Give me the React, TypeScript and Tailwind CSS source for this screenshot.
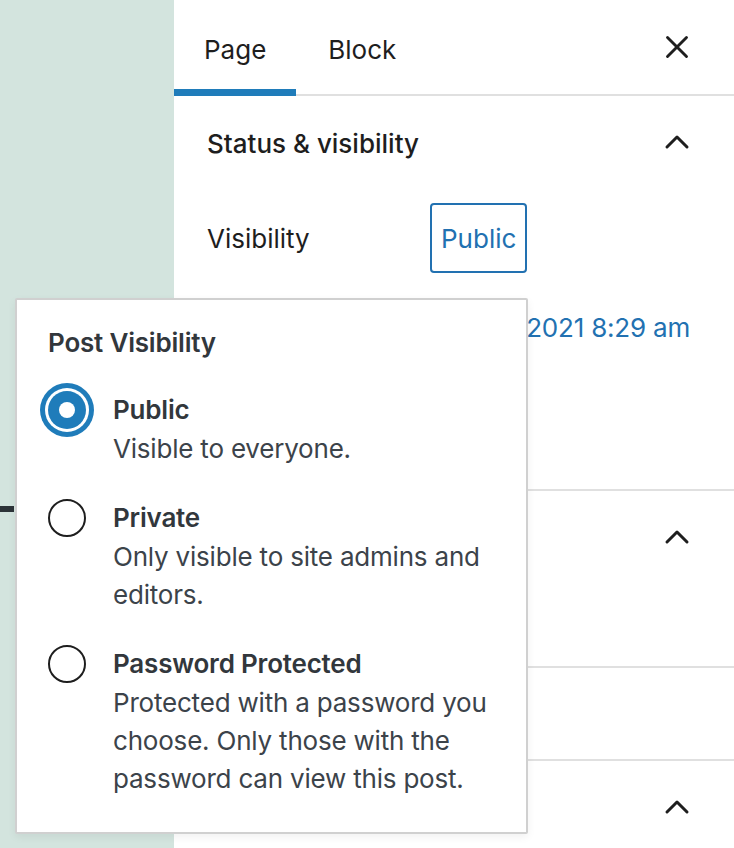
import { X, ChevronUp } from "lucide-react";

const font = { fontFamily: "Inter, 'Noto Sans', sans-serif" };

type Option = { id: string; label: string; desc: string[] };

const options: Option[] = [
  { id: "public", label: "Public", desc: ["Visible to everyone."] },
  { id: "private", label: "Private", desc: ["Only visible to site admins and", "editors."] },
  {
    id: "password",
    label: "Password Protected",
    desc: ["Protected with a password you", "choose. Only those with the", "password can view this post."],
  },
];

function Radio({ checked }: { checked: boolean }) {
  if (checked) {
    return (
      <span className="flex h-[38px] w-[38px] shrink-0 items-center justify-center rounded-full bg-[#1f7cba] shadow-[0_0_0_3px_#fff,0_0_0_8px_#1f7cba]">
        <span className="h-[16px] w-[16px] rounded-full bg-white" />
      </span>
    );
  }
  return <span className="h-[38px] w-[38px] shrink-0 rounded-full border-2 border-[#1e1e1e] bg-white" />;
}

// panel titles of the lower sections sit under the popover, only the chevrons show
function PanelHeader({ title, chevron = true }: { title?: string; chevron?: boolean }) {
  return (
    <div className="flex h-[92px] shrink-0 items-center justify-between pl-[33px] pr-[37px]">
      <span className="pt-[2px] text-[26px] font-medium text-[#1e1e1e]">{title}</span>
      {chevron ? <ChevronUp className="h-[40px] w-[40px] text-[#1e1e1e]" strokeWidth={1.8} /> : null}
    </div>
  );
}

export default function App() {
  const selected = "public";
  return (
    <div className="relative flex h-[848px] w-[734px] overflow-hidden bg-white" style={font}>
      {/* editor canvas strip */}
      <div className="relative w-[174px] shrink-0 bg-[#d3e4de]">
        <div className="absolute left-0 top-[506px] h-[6px] w-[14px] bg-[#2c3338]" />
      </div>

      {/* sidebar */}
      <div className="flex min-w-0 flex-1 flex-col bg-white">
        <div className="flex h-[96px] shrink-0 items-stretch border-b-2 border-[#e0e0e0]">
          <button className="relative px-[30px] pt-[4px] text-[26px] text-[#1e1e1e]">
            Page
            <span className="absolute bottom-[-2px] left-0 right-0 h-[7px] bg-[#1f7cba]" />
          </button>
          <button className="px-[32px] pt-[4px] text-[26px] text-[#1e1e1e]">Block</button>
          <div className="ml-auto flex items-center pr-[38px]">
            <X className="h-[38px] w-[38px] text-[#1e1e1e]" strokeWidth={1.8} />
          </div>
        </div>

        <div className="h-[395px] shrink-0 border-b-2 border-[#e0e0e0]">
          <PanelHeader title="Status & visibility" />
          <div className="mt-[15px] flex items-center pl-[33px] pr-[32px]">
            <span className="w-[223px] text-[26px] text-[#1e1e1e]">Visibility</span>
            <button className="h-[70px] rounded-[4px] border-2 border-[#2271b1] px-[9px] text-[26px] text-[#2271b1]">
              Public
            </button>
          </div>
          <div className="mt-[20px] flex h-[68px] items-center justify-end pr-[44px]">
            <span className="whitespace-nowrap text-[26px] tracking-[-0.2px] text-[#2271b1]">2021 8:29 am</span>
          </div>
        </div>

        <div className="h-[177px] shrink-0 border-b-2 border-[#e0e0e0]">
          <PanelHeader />
        </div>

        <div className="h-[93px] shrink-0 border-b-2 border-[#e0e0e0]">
          <PanelHeader chevron={false} />
        </div>

        <div className="flex-1">
          <PanelHeader />
        </div>
      </div>

      {/* visibility popover */}
      <div className="absolute left-[15px] top-[298px] w-[513px] rounded-[2px] border-2 border-[#d0d0d0] bg-white pb-[34px] pl-[31px] pr-[20px] pt-[24px] shadow-[0_3px_8px_rgba(0,0,0,0.06)]">
        <div className="text-[26px] font-semibold leading-[38px] tracking-[-0.2px] text-[#32373c]">Post Visibility</div>
        <div className="mt-[29px] flex flex-col gap-[31px]">
          {options.map((o) => (
            <div key={o.id} className="flex items-start gap-[27px]">
              <Radio checked={o.id === selected} />
              <div className="-mt-[1px]">
                <div className="text-[26px] font-semibold leading-[40px] tracking-[-0.2px] text-[#32373c]">{o.label}</div>
                {o.desc.map((d) => (
                  <div key={d} className="text-[26px] leading-[38px] tracking-[-0.2px] text-[#3c434a]">
                    {d}
                  </div>
                ))}
              </div>
            </div>
          ))}
        </div>
      </div>
    </div>
  );
}
